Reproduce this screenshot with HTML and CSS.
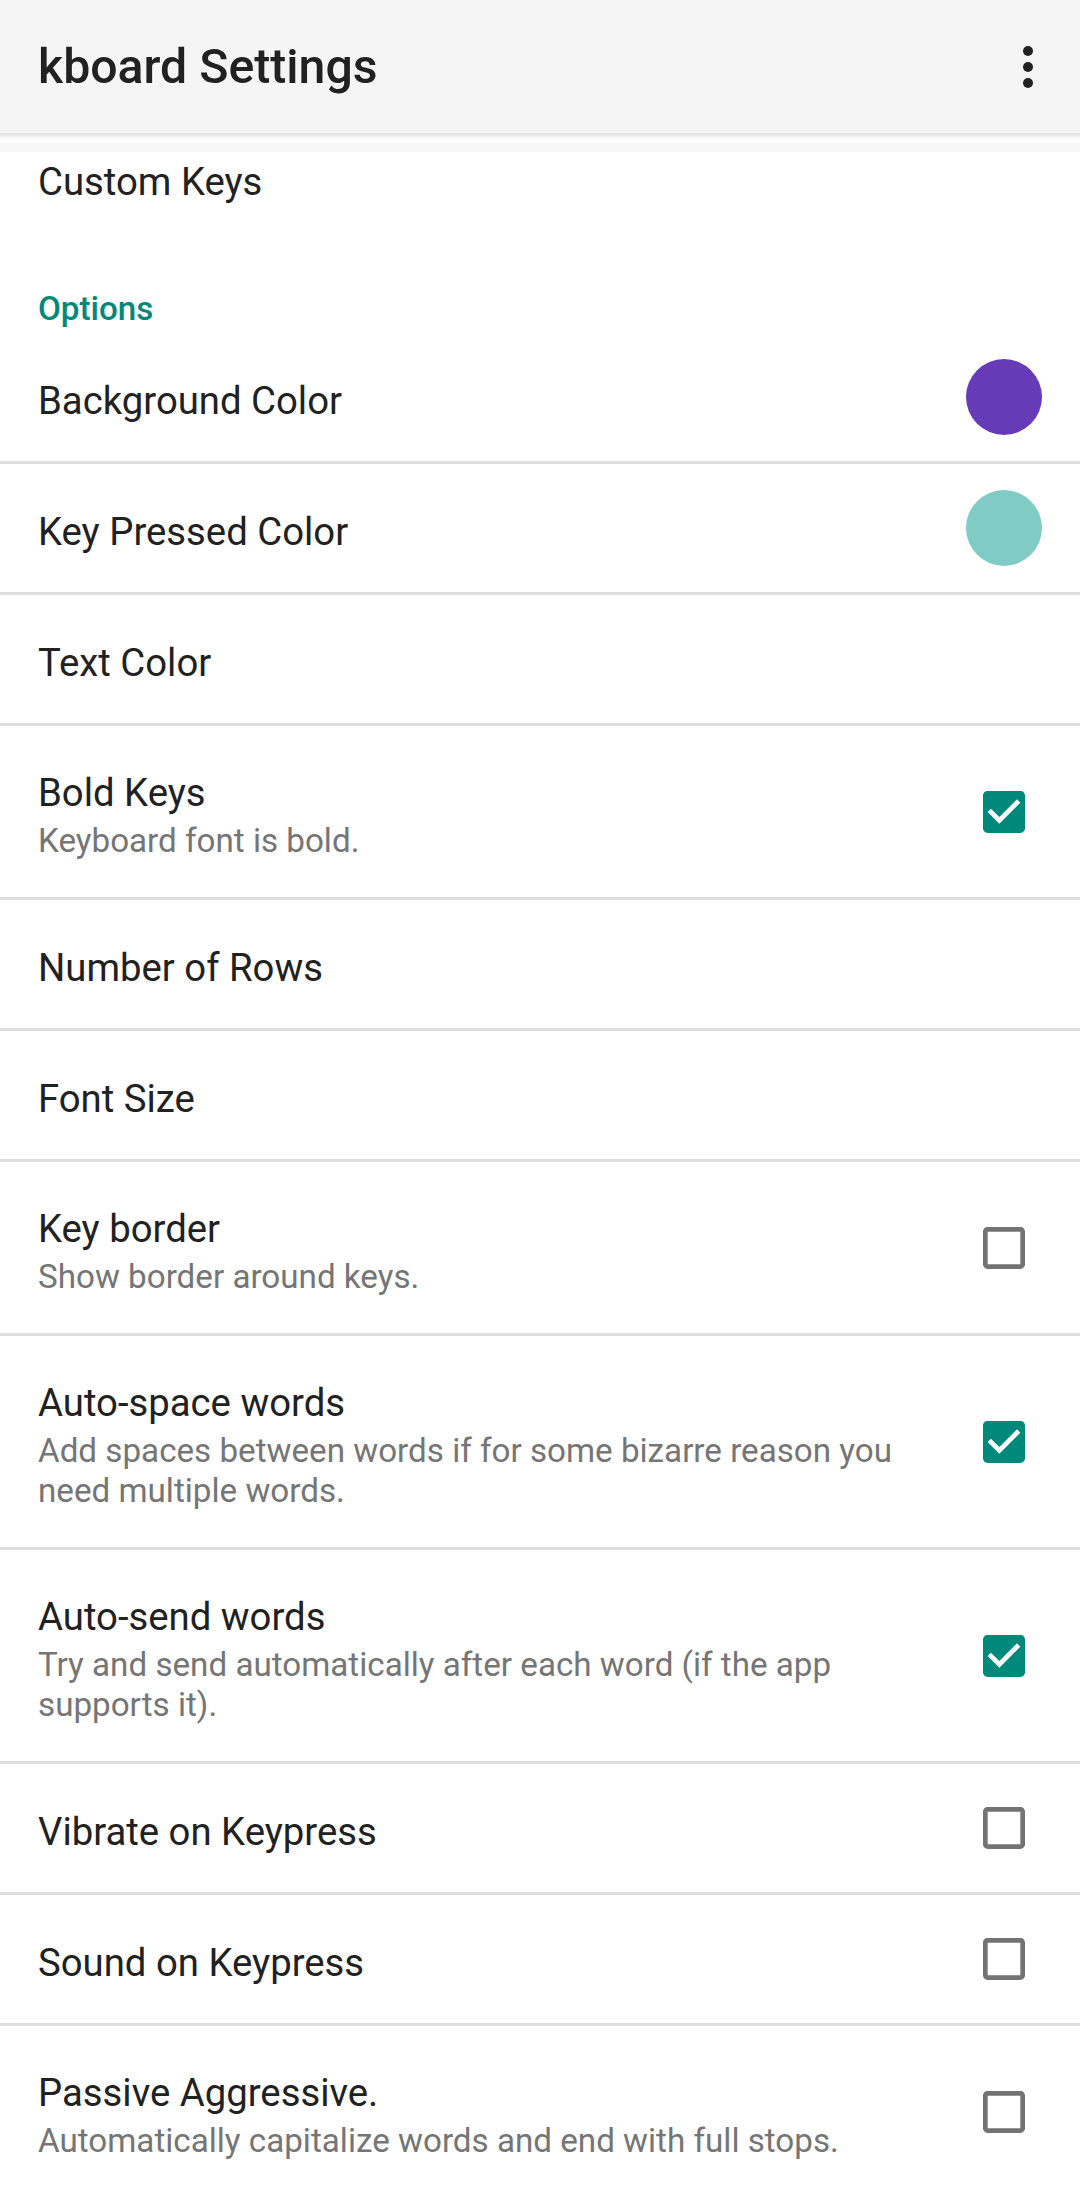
FILE: index.html
```html
<!DOCTYPE html>
<html lang="en">
<head>
<meta charset="utf-8">
<title>kboard Settings</title>
<link rel="stylesheet" href="styles.css">
</head>
<body>
<header class="appbar">
  <h1 class="appbar-title">kboard Settings</h1>
  <svg class="overflow" viewBox="0 0 10 42" width="10" height="42" aria-hidden="true">
    <circle cx="5" cy="5" r="5"/>
    <circle cx="5" cy="21" r="5"/>
    <circle cx="5" cy="37" r="5"/>
  </svg>
</header>
<div class="appbar-shadow"></div>
<div class="scroll-strip"></div>
<main class="list">
  <div class="item-partial"><span class="title">Custom Keys</span></div>
  <div class="category">Options</div>

  <div class="row">
    <div class="text"><div class="title">Background Color</div></div>
    <div class="widget"><span class="swatch swatch-purple"></span></div>
  </div>
  <div class="row">
    <div class="text"><div class="title">Key Pressed Color</div></div>
    <div class="widget"><span class="swatch swatch-teal"></span></div>
  </div>
  <div class="row">
    <div class="text"><div class="title">Text Color</div></div>
  </div>
  <div class="row">
    <div class="text">
      <div class="title">Bold Keys</div>
      <div class="summary">Keyboard font is bold.</div>
    </div>
    <div class="widget">
      <svg class="checkbox checked" viewBox="3 3 18 18" aria-hidden="true"><path d="M19 3H5c-1.11 0-2 .9-2 2v14c0 1.1.89 2 2 2h14c1.11 0 2-.9 2-2V5c0-1.1-.89-2-2-2zm-9 14l-5-5 1.41-1.41L10 14.17l7.59-7.59L19 8l-9 9z"/></svg>
    </div>
  </div>
  <div class="row">
    <div class="text"><div class="title">Number of Rows</div></div>
  </div>
  <div class="row">
    <div class="text"><div class="title">Font Size</div></div>
  </div>
  <div class="row">
    <div class="text">
      <div class="title">Key border</div>
      <div class="summary">Show border around keys.</div>
    </div>
    <div class="widget">
      <svg class="checkbox" viewBox="3 3 18 18" aria-hidden="true"><path d="M19 5v14H5V5h14m0-2H5c-1.1 0-2 .9-2 2v14c0 1.1.9 2 2 2h14c1.1 0 2-.9 2-2V5c0-1.1-.9-2-2-2z"/></svg>
    </div>
  </div>
  <div class="row">
    <div class="text">
      <div class="title">Auto-space words</div>
      <div class="summary">Add spaces between words if for some bizarre reason you need multiple words.</div>
    </div>
    <div class="widget">
      <svg class="checkbox checked" viewBox="3 3 18 18" aria-hidden="true"><path d="M19 3H5c-1.11 0-2 .9-2 2v14c0 1.1.89 2 2 2h14c1.11 0 2-.9 2-2V5c0-1.1-.89-2-2-2zm-9 14l-5-5 1.41-1.41L10 14.17l7.59-7.59L19 8l-9 9z"/></svg>
    </div>
  </div>
  <div class="row">
    <div class="text">
      <div class="title">Auto-send words</div>
      <div class="summary">Try and send automatically after each word (if the app supports it).</div>
    </div>
    <div class="widget">
      <svg class="checkbox checked" viewBox="3 3 18 18" aria-hidden="true"><path d="M19 3H5c-1.11 0-2 .9-2 2v14c0 1.1.89 2 2 2h14c1.11 0 2-.9 2-2V5c0-1.1-.89-2-2-2zm-9 14l-5-5 1.41-1.41L10 14.17l7.59-7.59L19 8l-9 9z"/></svg>
    </div>
  </div>
  <div class="row">
    <div class="text"><div class="title">Vibrate on Keypress</div></div>
    <div class="widget">
      <svg class="checkbox" viewBox="3 3 18 18" aria-hidden="true"><path d="M19 5v14H5V5h14m0-2H5c-1.1 0-2 .9-2 2v14c0 1.1.9 2 2 2h14c1.1 0 2-.9 2-2V5c0-1.1-.9-2-2-2z"/></svg>
    </div>
  </div>
  <div class="row">
    <div class="text"><div class="title">Sound on Keypress</div></div>
    <div class="widget">
      <svg class="checkbox" viewBox="3 3 18 18" aria-hidden="true"><path d="M19 5v14H5V5h14m0-2H5c-1.1 0-2 .9-2 2v14c0 1.1.9 2 2 2h14c1.1 0 2-.9 2-2V5c0-1.1-.9-2-2-2z"/></svg>
    </div>
  </div>
  <div class="row row-last">
    <div class="text">
      <div class="title">Passive Aggressive.</div>
      <div class="summary">Automatically capitalize words and end with full stops.</div>
    </div>
    <div class="widget">
      <svg class="checkbox" viewBox="3 3 18 18" aria-hidden="true"><path d="M19 5v14H5V5h14m0-2H5c-1.1 0-2 .9-2 2v14c0 1.1.9 2 2 2h14c1.1 0 2-.9 2-2V5c0-1.1-.9-2-2-2z"/></svg>
    </div>
  </div>
</main>
</body>
</html>
```

FILE: styles.css
```css
html, body {
  margin: 0;
  padding: 0;
  background: #ffffff;
}

body {
  width: 1080px;
  font-family: Roboto, "Noto Sans", "Liberation Sans", sans-serif;
  color: #212121;
  overflow: hidden;
}

.appbar {
  height: 133px;
  background: #f5f5f5;
  display: flex;
  align-items: center;
  justify-content: space-between;
  padding: 0 47px 0 38px;
}

.appbar-title {
  margin: 0;
  font-size: 48.2px;
  font-weight: 500;
  line-height: 58px;
  color: #212121;
}

.overflow {
  fill: #212121;
  display: block;
}

.appbar-shadow {
  height: 10px;
  background: linear-gradient(to bottom, #e3e3e3 0, #ececec 3px, #fafafa 5px, #fcfcfc 10px);
}

.scroll-strip {
  height: 9px;
  background: #f6f6f6;
}

.list {
  display: flex;
  flex-direction: column;
}

.item-partial {
  height: 96px;
  box-sizing: border-box;
  padding: 7px 38px 0;
}

.title {
  font-size: 38.3px;
  line-height: 46px;
  color: #212121;
}

.category {
  height: 85px;
  box-sizing: border-box;
  padding: 41px 38px 0;
  font-size: 33.2px;
  line-height: 40px;
  font-weight: 500;
  color: #00897b;
}

.row {
  display: flex;
  align-items: center;
  min-height: 128px;
  padding: 0 38px;
  border-bottom: 3px solid #dedede;
}

.row-last {
  border-bottom: none;
}

.text {
  flex: 1;
  min-width: 0;
  margin-right: 38px;
  padding: 44px 0 36px;
}

.summary {
  margin-top: 5px;
  font-size: 33.2px;
  line-height: 40px;
  color: #757575;
}

.widget {
  width: 76px;
  display: flex;
  justify-content: center;
  align-items: center;
  flex-shrink: 0;
}

.swatch {
  display: block;
  width: 76px;
  height: 76px;
  border-radius: 50%;
}

.swatch-purple {
  background: #673ab7;
}

.swatch-teal {
  background: #80cbc4;
}

.checkbox {
  display: block;
  width: 42px;
  height: 42px;
  fill: #737373;
}

.checkbox.checked {
  fill: #00897b;
}
```
